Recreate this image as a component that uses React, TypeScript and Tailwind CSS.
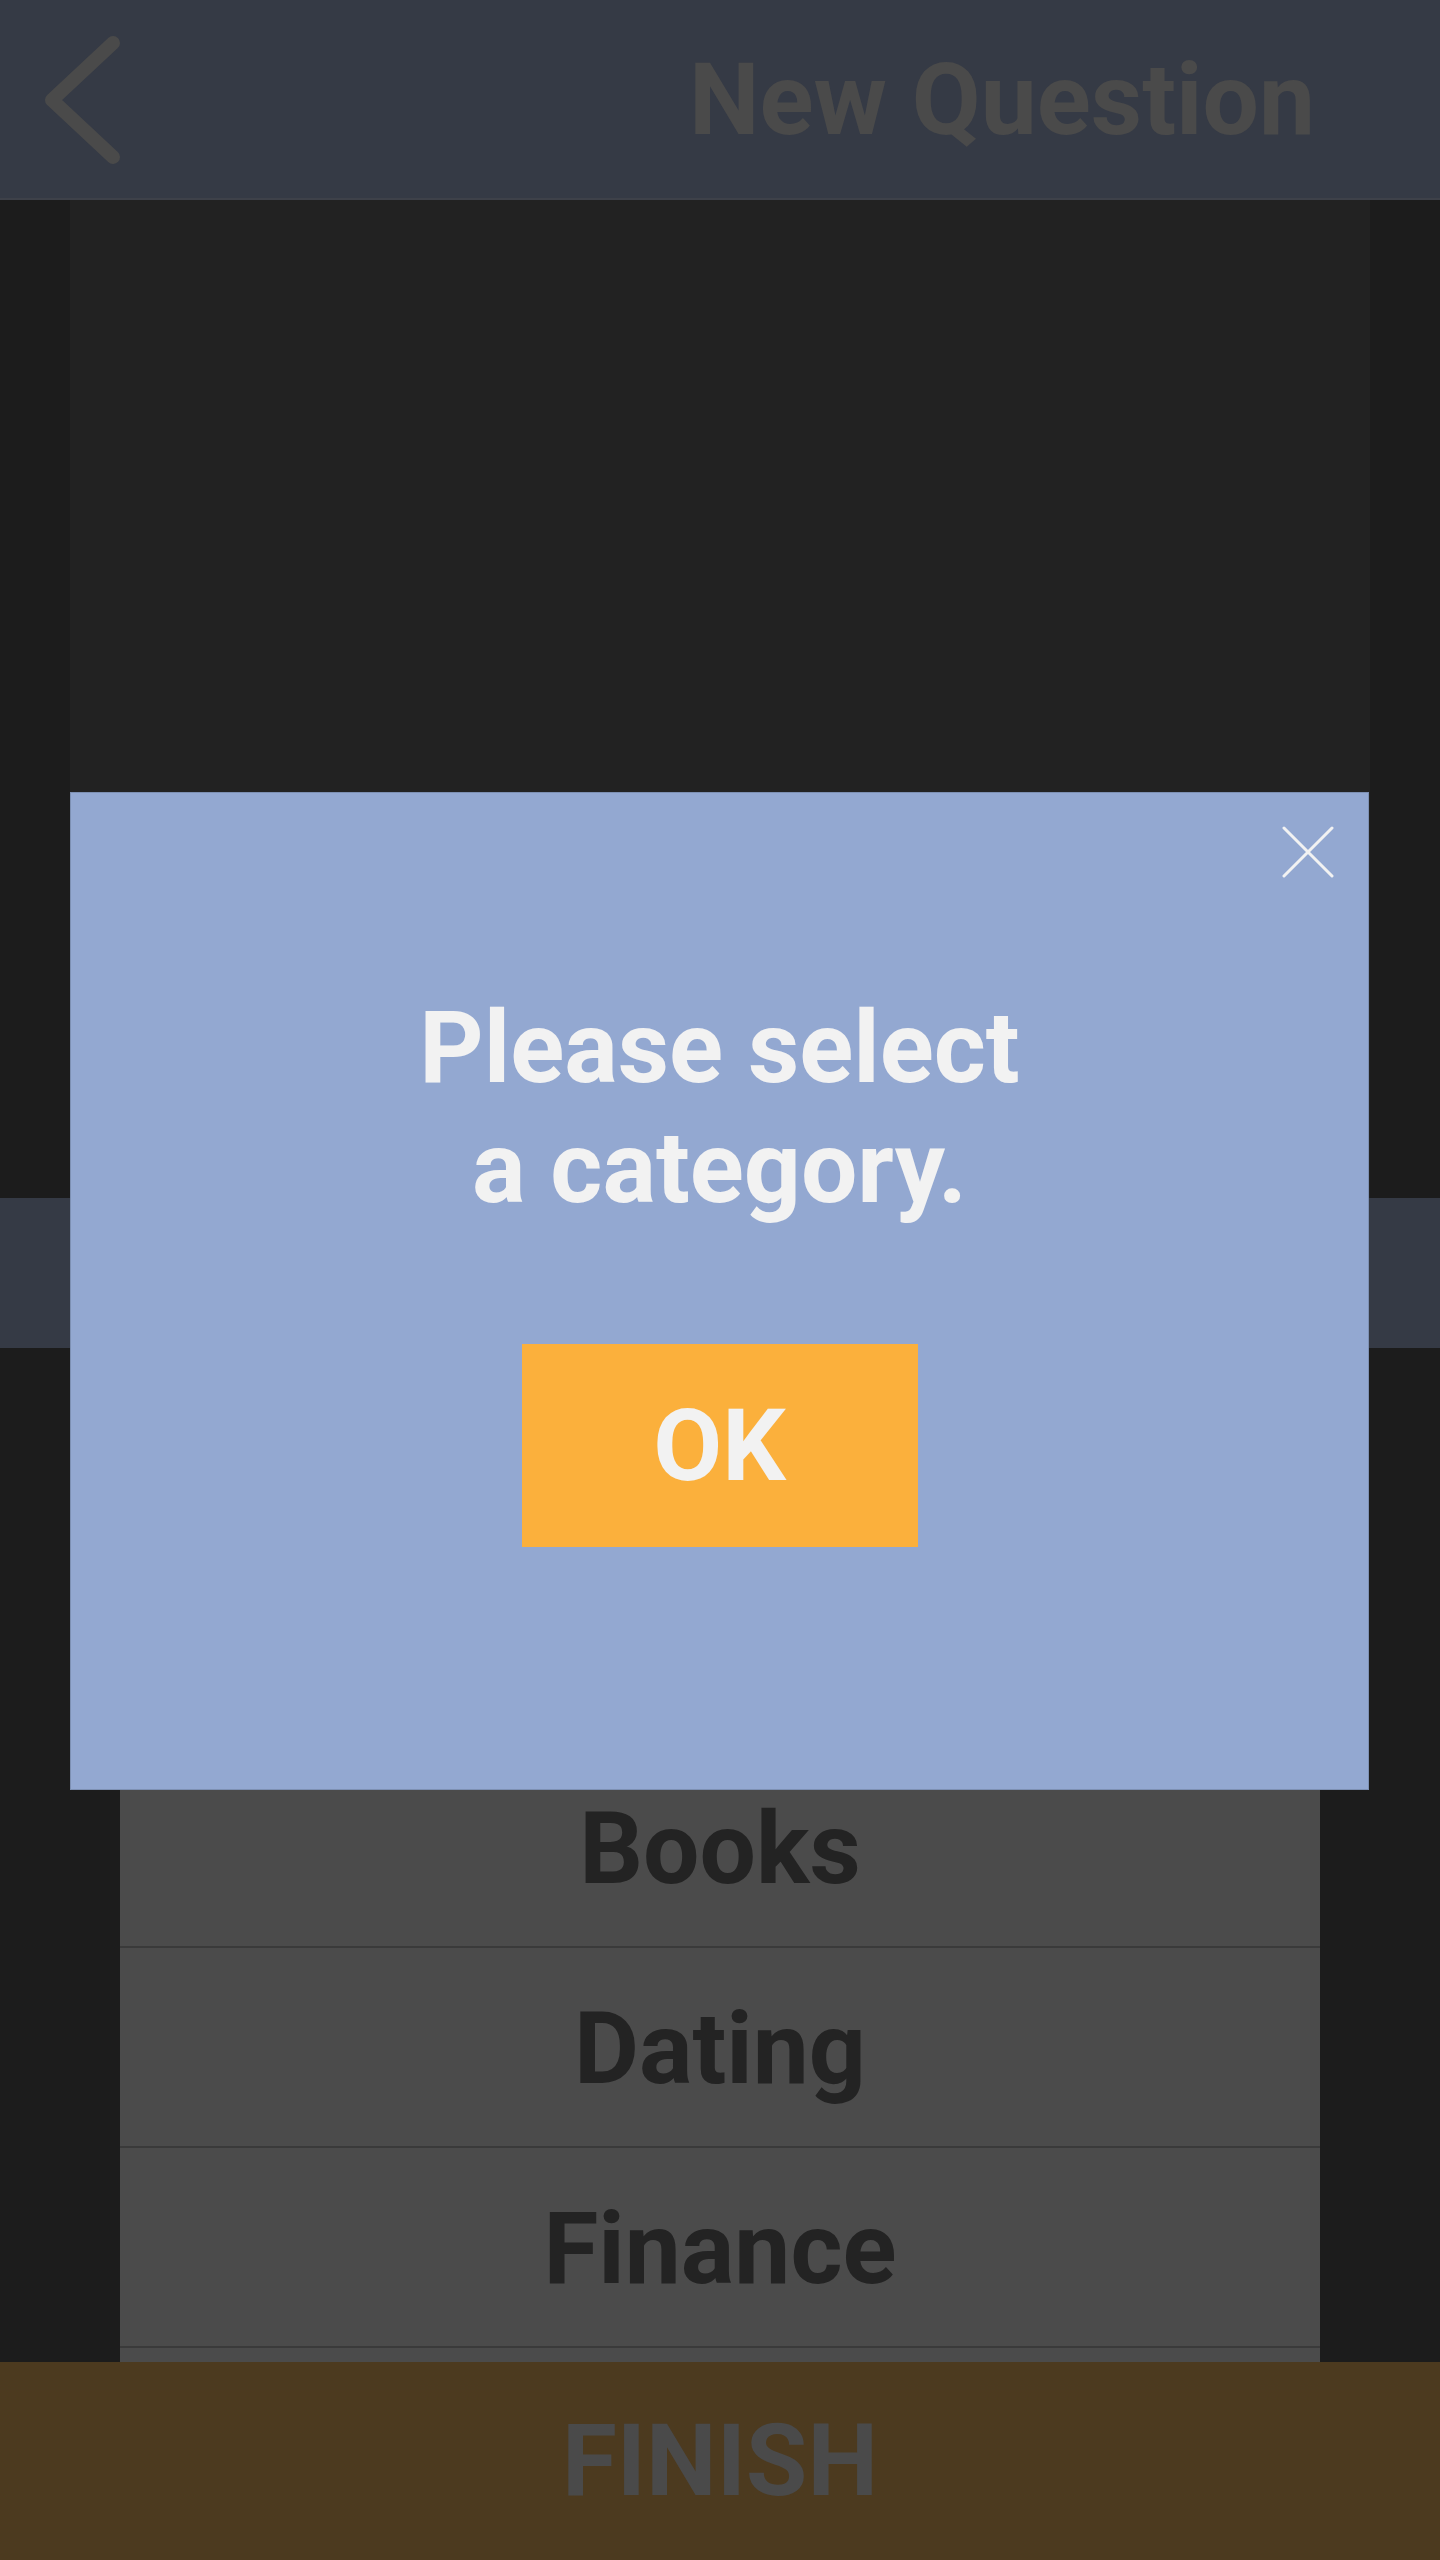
import React from 'react'

// last row only peeks out above the finish bar, so it carries no label
const rows = ['Animals', 'Art', 'Books', 'Dating', 'Finance', '']

const BackIcon = () => (
    <svg width="90" height="140" viewBox="0 0 90 140" className="block">
        <path
            d="M69 8 L8 65 L69 122"
            fill="none"
            stroke="#4a4a4a"
            strokeWidth="14"
            strokeLinecap="round"
            strokeLinejoin="round"
        />
    </svg>
)

const CloseIcon = () => (
    <svg width="52" height="52" viewBox="0 0 52 52" className="block">
        <path d="M2 2 L50 50 M50 2 L2 50" stroke="#f2f2f2" strokeWidth="3" strokeLinecap="round" />
    </svg>
)

export default function App() {
    return (
        <div
            className="relative flex h-[2560px] w-[1440px] flex-col overflow-hidden bg-[#1c1c1c]"
            style={{ fontFamily: 'Roboto, "Liberation Sans", sans-serif' }}
        >
            {/* Header */}
            <div className="flex h-[200px] flex-none items-start border-b-2 border-[#3e4149] bg-[#353a45]">
                <div className="pl-[44px] pt-[35px]">
                    <BackIcon />
                </div>
                <div className="flex-1 pr-[125px] pt-[40px] text-right text-[100px] font-bold leading-[120px] text-[#4a4a4a]">
                    New Question
                </div>
            </div>

            {/* Question area */}
            <div className="flex h-[998px] flex-none px-[70px]">
                <div className="flex-1 bg-[#222222]" />
            </div>

            {/* Section band */}
            <div className="h-[150px] flex-none bg-[#353a45]" />

            {/* Category list */}
            <div className="min-h-0 flex-1 overflow-hidden px-[120px]">
                {rows.map((name, i) => (
                    <div
                        key={i}
                        className="flex h-[200px] items-center justify-center border-b-2 border-[#3a3a3a] bg-[#4b4b4b] pt-[4px] text-[100px] font-bold leading-none text-[#232323]"
                    >
                        {name}
                    </div>
                ))}
            </div>

            {/* Finish bar */}
            <div className="flex h-[198px] flex-none items-center justify-center bg-[#4c3a1f] text-[100px] font-bold leading-none text-[#4a4a4a]">
                FINISH
            </div>

            {/* Alert dialog */}
            <div className="absolute left-[70px] top-[792px] flex h-[998px] w-[1299px] flex-col items-center border border-[#7d90b3] bg-[#93a8d1]">
                <button className="absolute right-[34px] top-[33px]">
                    <CloseIcon />
                </button>
                <div className="mt-[195px] text-center text-[100px] font-bold leading-[120px] text-[#f2f2f2]">
                    Please select
                    <br />
                    a category.
                </div>
                <button className="mt-[116px] flex h-[203px] w-[396px] items-center justify-center bg-[#fbb03c] text-[100px] font-bold leading-none text-[#f2f2f2]">
                    OK
                </button>
            </div>
        </div>
    )
}
